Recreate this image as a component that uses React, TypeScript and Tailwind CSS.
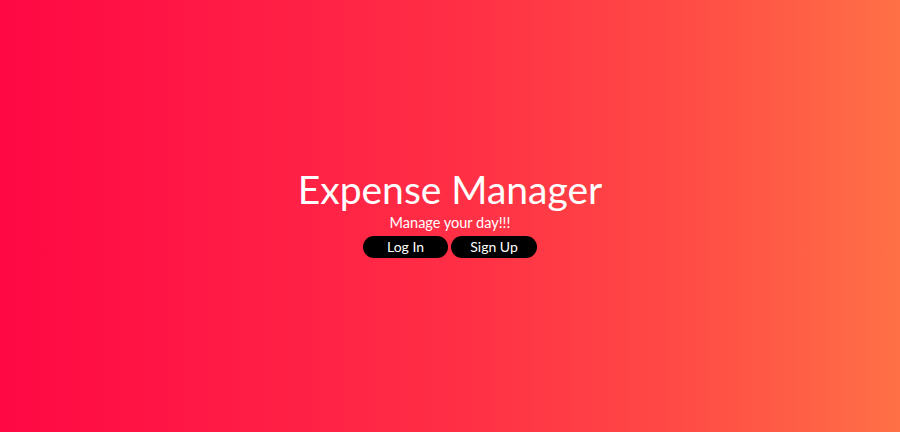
const App = () => {
  return (
    <main className="h-screen w-full bg-[linear-gradient(to_right,#ff0844_0%,#ff1a45_25%,#ff2e45_50%,#ff4a45_75%,#ff7046_100%)] flex flex-col items-center justify-center font-['Lato','Liberation_Sans',sans-serif] text-white pb-[8px]">
      <h1 className="text-[39px] leading-[46px] font-normal">Expense Manager</h1>
      <p className="text-[14.5px] leading-[20px] mt-[1px]">Manage your day!!!</p>
      <div className="flex gap-[3px] mt-[3px]">
        <button className="w-[85px] h-[22px] rounded-full bg-black text-[14px] leading-[22px] text-white">Log In</button>
        <button className="w-[86px] h-[22px] rounded-full bg-black text-[14px] leading-[22px] text-white">Sign Up</button>
      </div>
    </main>
  );
};

export default App;
